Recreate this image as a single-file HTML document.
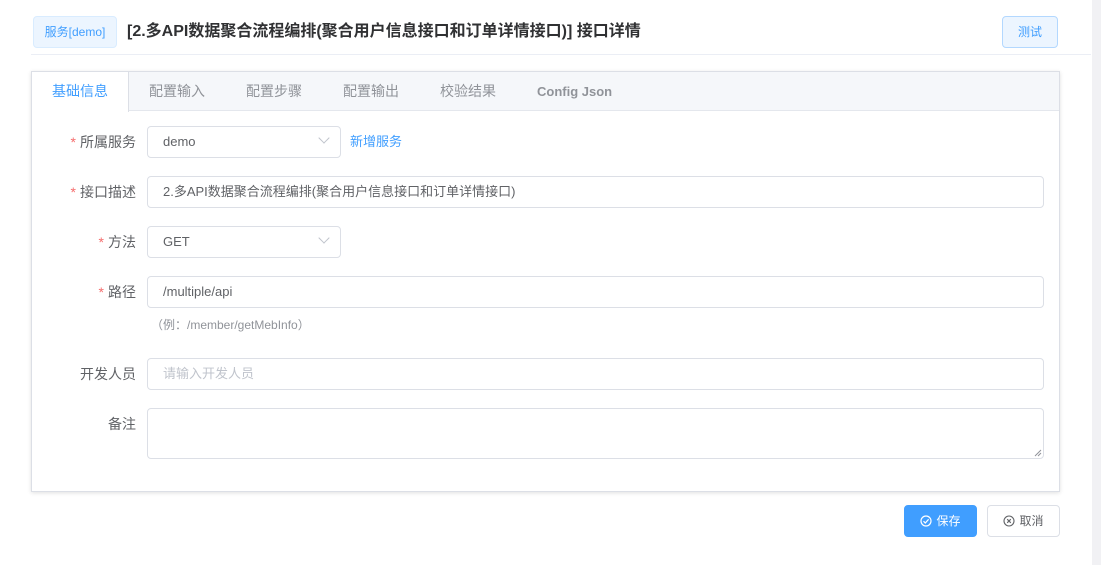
<!DOCTYPE html>
<html><head><meta charset="utf-8"><style>
*{box-sizing:border-box;margin:0;padding:0}
body{width:1101px;height:565px;background:#fff;font-family:"Liberation Sans","Noto Sans CJK SC",sans-serif;font-size:14px;color:#606266;position:relative;overflow:hidden}
.abs{position:absolute}
.sb{right:0;top:0;width:9px;height:565px;background:#f1f1f4}
.tag{left:33px;top:16px;width:84px;height:32px;border:1px solid #d9ecff;background:#ecf5ff;color:#409eff;font-size:12px;line-height:30px;text-align:center;border-radius:4px}
.title{left:127px;top:20px;font-size:16px;font-weight:bold;color:#303133;line-height:24px}
.test{left:1002px;top:16px;width:56px;height:32px;border:1px solid #b3d8ff;background:#ecf5ff;color:#409eff;font-size:12px;line-height:30px;text-align:center;border-radius:4px}
.hr{left:31px;top:54px;width:1060px;height:1px;background:#ebeef5}
.card{left:31px;top:71px;width:1029px;height:421px;border:1px solid #dcdfe6;box-shadow:0 1px 4px rgba(0,0,0,.12);background:#fff}
.tabs{position:absolute;left:0;top:0;width:100%;height:39px;background:#f5f7fa;border-bottom:1px solid #e4e7ed}
.tab{position:absolute;top:0;height:39px;line-height:39px;color:#909399;font-size:14px}
.tab.act{background:#fff;color:#409eff;border-right:1px solid #dcdfe6;height:40px;left:0;width:97px;text-align:center}
.lbl{position:absolute;right:965px;font-size:14px;color:#606266;line-height:32px;text-align:right;white-space:nowrap}
.lbl i{color:#f56c6c;font-style:normal;margin-right:4px}
.inp{position:absolute;height:32px;border:1px solid #dcdfe6;border-radius:4px;padding-left:15px;line-height:30px;font-size:13px;color:#606266;background:#fff}
.arr{position:absolute;right:12px;top:7px;width:8px;height:8px;border-right:1px solid #c0c4cc;border-bottom:1px solid #c0c4cc;transform:rotate(45deg)}
.btn{position:absolute;top:505px;height:32px;border-radius:4px;font-size:12px;line-height:30px;text-align:center}
.btn svg{vertical-align:-2px;margin-right:4px}
</style></head><body>
<div class="abs sb"></div>
<div class="abs tag">服务[demo]</div>
<div class="abs title">[2.多API数据聚合流程编排(聚合用户信息接口和订单详情接口)] 接口详情</div>
<div class="abs test">测试</div>
<div class="abs hr"></div>
<div class="abs card">
 <div class="tabs">
  <div class="tab act">基础信息</div>
  <div class="tab" style="left:117px">配置输入</div>
  <div class="tab" style="left:214px">配置步骤</div>
  <div class="tab" style="left:311px">配置输出</div>
  <div class="tab" style="left:408px">校验结果</div>
  <div class="tab" style="left:505px;font-weight:bold;font-size:13px">Config Json</div>
 </div>
</div>
<div class="lbl" style="top:126px"><i>*</i>所属服务</div>
<div class="inp" style="left:147px;top:126px;width:194px">demo<span class="arr"></span></div>
<div class="abs" style="left:350px;top:126px;line-height:32px;color:#409eff;font-size:13px">新增服务</div>
<div class="lbl" style="top:176px"><i>*</i>接口描述</div>
<div class="inp" style="left:147px;top:176px;width:897px">2.多API数据聚合流程编排(聚合用户信息接口和订单详情接口)</div>
<div class="lbl" style="top:226px"><i>*</i>方法</div>
<div class="inp" style="left:147px;top:226px;width:194px">GET<span class="arr"></span></div>
<div class="lbl" style="top:276px"><i>*</i>路径</div>
<div class="inp" style="left:147px;top:276px;width:897px">/multiple/api</div>
<div class="abs" style="left:151px;top:316px;font-size:12px;color:#909399;line-height:18px">（例：/member/getMebInfo）</div>
<div class="lbl" style="top:358px">开发人员</div>
<div class="inp" style="left:147px;top:358px;width:897px;color:#c0c4cc">请输入开发人员</div>
<div class="lbl" style="top:408px">备注</div>
<div class="inp" style="left:147px;top:408px;width:897px;height:51px"><svg style="position:absolute;right:1px;bottom:1px" width="8" height="8"><path d="M1 7L7 1M4 7L7 4" stroke="#909399" stroke-width="1"/></svg></div>
<div class="btn" style="left:904px;width:73px;background:#409eff;color:#fff;border:1px solid #409eff"><svg width="12" height="12" viewBox="0 0 12 12"><circle cx="6" cy="6" r="5" fill="none" stroke="#fff" stroke-width="1.2"/><path d="M3.5 6.2L5.3 8 8.6 4.3" fill="none" stroke="#fff" stroke-width="1.2"/></svg>保存</div>
<div class="btn" style="left:987px;width:73px;background:#fff;color:#606266;border:1px solid #dcdfe6"><svg width="12" height="12" viewBox="0 0 12 12"><circle cx="6" cy="6" r="5" fill="none" stroke="#606266" stroke-width="1.1"/><path d="M4.2 4.2L7.8 7.8M7.8 4.2L4.2 7.8" stroke="#606266" stroke-width="1.1"/></svg>取消</div>
</body></html>
